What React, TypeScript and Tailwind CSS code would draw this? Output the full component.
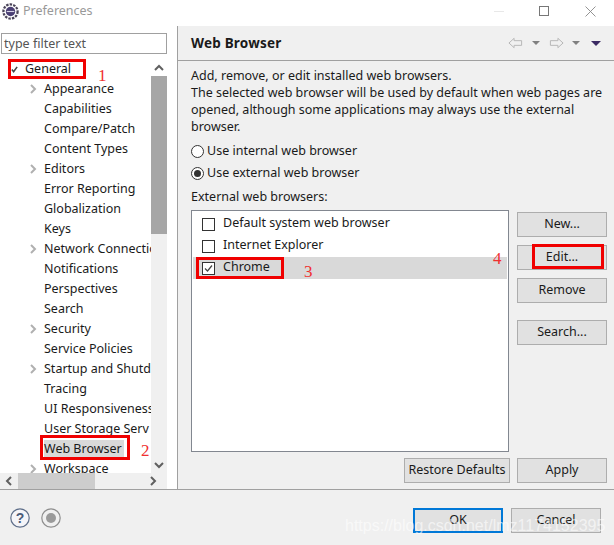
import React from 'react'

const treeItems = [
  { label: 'Appearance', arrow: true },
  { label: 'Capabilities' },
  { label: 'Compare/Patch' },
  { label: 'Content Types' },
  { label: 'Editors', arrow: true },
  { label: 'Error Reporting' },
  { label: 'Globalization' },
  { label: 'Keys' },
  { label: 'Network Connectio', arrow: true },
  { label: 'Notifications' },
  { label: 'Perspectives' },
  { label: 'Search' },
  { label: 'Security', arrow: true },
  { label: 'Service Policies' },
  { label: 'Startup and Shutd', arrow: true },
  { label: 'Tracing' },
  { label: 'UI Responsiveness' },
  { label: 'User Storage Serv' },
  { label: 'Web Browser', selected: true },
  { label: 'Workspace', arrow: true },
]

const Chevron = ({ dir, color = '#a8a8a8' }: { dir: 'up' | 'down' | 'left' | 'right'; color?: string }) => {
  const d = {
    up: 'M1 6 L5 2 L9 6',
    down: 'M1 2 L5 6 L9 2',
    left: 'M6 1 L2 5 L6 9',
    right: 'M2 1 L6 5 L2 9',
  }[dir]
  const size = dir === 'up' || dir === 'down' ? 'w-[10px] h-[8px]' : 'w-[8px] h-[10px]'
  const box = dir === 'up' || dir === 'down' ? '0 0 10 8' : '0 0 8 10'
  return (
    <svg viewBox={box} className={size} fill="none" stroke={color} strokeWidth="2">
      <path d={d} />
    </svg>
  )
}

const Btn = ({ label, className = '' }: { label: string; className?: string }) => (
  <button className={`h-[25px] bg-[#e1e1e1] border border-[#adadad] text-[12.5px] text-[#1a1a1a] flex items-center justify-center ${className}`}>
    {label}
  </button>
)

const Mark = ({ className }: { className: string }) => (
  <div className={`absolute border-[3px] border-[#f00000] ${className}`} />
)

const Num = ({ n, className }: { n: string; className: string }) => (
  <span className={`absolute text-[#f03030] text-[17px] leading-none font-['Liberation_Serif',serif] ${className}`}>{n}</span>
)

const Radio = ({ checked, label }: { checked?: boolean; label: string }) => (
  <div className="flex items-center h-[22px]">
    <span className="w-[13px] h-[13px] shrink-0 rounded-full border border-[#333] bg-white flex items-center justify-center mr-[3px]">
      {checked && <span className="w-[7px] h-[7px] rounded-full bg-[#333]" />}
    </span>
    <span>{label}</span>
  </div>
)

const Row = ({ label, checked, active }: { label: string; checked?: boolean; active?: boolean }) => (
  <div className={`flex items-center h-[22px] pl-[9px] ${active ? 'bg-[#d9d9d9]' : ''}`}>
    <span className="w-[13px] h-[13px] shrink-0 border border-[#333] bg-white flex items-center justify-center mr-[8px]">
      {checked && (
        <svg viewBox="0 0 11 11" className="w-[11px] h-[11px]" fill="none" stroke="#444" strokeWidth="1.2">
          <path d="M2 5.5 L4.5 8 L9 2.5" />
        </svg>
      )}
    </span>
    <span className="-mt-[1px]">{label}</span>
  </div>
)

export default function App() {
  return (
    <div className="relative w-[614px] h-[545px] overflow-hidden bg-[#f0f0f0] flex flex-col text-[12.5px] text-[#1a1a1a] font-['Noto_Sans',sans-serif]">
      {/* title bar */}
      <div className="h-[26px] shrink-0 bg-white flex items-center pl-[2px] pb-[4px]">
        <svg viewBox="0 0 18 18" className="w-[17px] h-[17px]">
          <circle cx="9" cy="9" r="7.5" fill="none" stroke="#4a4458" strokeWidth="2.4" strokeDasharray="2.6 1.2" />
          <circle cx="9" cy="9" r="5" fill="#4a3f73" />
          <rect x="5" y="8.4" width="8" height="1.2" fill="#d8d4e8" />
        </svg>
        <span className="ml-[4px] text-[#999] text-[12.5px]">Preferences</span>
        <div className="ml-auto flex items-center">
          <span className="w-[10px] h-px bg-[#e8e8e8] mr-[35px]" />
          <span className="w-[10px] h-[10px] border border-[#777] mr-[36px]" />
          <svg viewBox="0 0 11 11" className="w-[11px] h-[11px] mr-[18px]" fill="none" stroke="#888" strokeWidth="0.9">
            <path d="M0.5 0.5 L10.5 10.5 M10.5 0.5 L0.5 10.5" />
          </svg>
        </div>
      </div>

      {/* main area */}
      <div className="flex h-[464px] shrink-0 border-b border-[#a0a0a0]">
        {/* left pane */}
        <div className="w-[178px] shrink-0 bg-white border-r border-[#a0a0a0] flex flex-col overflow-hidden">
          <div className="w-[167px] h-[33px] shrink-0 pt-[7px] pl-px">
            <div className="h-[21px] w-[166px] border border-[#a0a0a0] flex items-center pl-[2px] pt-[2px] text-[#555]">type filter text</div>
          </div>
          <div className="w-[167px] h-[414px] shrink-0 flex">
            <div className="w-[151px] shrink-0 overflow-hidden whitespace-nowrap">
              <div className="flex items-center h-[20px]">
                <svg viewBox="0 0 8 8" className="w-[7px] h-[7px] ml-[11px] mr-[7px]" fill="none" stroke="#444" strokeWidth="1.8">
                  <path d="M1 4 L3 6.5 L7 1" />
                </svg>
                <span>General</span>
              </div>
              {treeItems.map((it) => (
                <div key={it.label} className="flex items-center h-[20px] pl-[29px]">
                  <span className="w-[15px] shrink-0 flex">{it.arrow && <Chevron dir="right" color="#b0b0b0" />}</span>
                  <span className={`shrink-0 ${it.selected ? 'bg-[#d9d9d9] pr-[2px]' : ''}`}>{it.label}</span>
                </div>
              ))}
            </div>
            {/* vertical scrollbar */}
            <div className="w-[16px] flex flex-col">
              <div className="h-[17px] flex items-center justify-center"><Chevron dir="up" color="#606060" /></div>
              <div className="h-[158px] bg-[#a6a6a6]" />
              <div className="flex-1 bg-[#f0f0f0]" />
              <div className="h-[17px] bg-[#f0f0f0] flex items-center justify-center"><Chevron dir="down" color="#606060" /></div>
            </div>
          </div>
          {/* horizontal scrollbar */}
          <div className="w-[167px] h-[16px] shrink-0 bg-[#f0f0f0] flex items-center">
            <div className="w-[18px] flex justify-center"><Chevron dir="left" color="#606060" /></div>
            <div className="w-[77px] h-full bg-[#cdcdcd]" />
            <div className="ml-auto w-[18px] mr-[5px] flex justify-center"><Chevron dir="right" color="#606060" /></div>
          </div>
        </div>

        {/* right pane */}
        <div className="flex-1 min-w-0 flex flex-col">
          <div className="h-[35px] shrink-0 border-b border-[#a0a0a0] flex items-center pl-[13px] pr-[13px]">
            <span className="font-bold text-[13.5px] tracking-[0.2px]">Web Browser</span>
            <div className="ml-auto flex items-center">
              <svg viewBox="0 0 16 12" className="w-[15px] h-[12px] mr-[9px]" fill="none" stroke="#b4b4b4">
                <path d="M1 6 L6.5 1 V3.5 H14.5 V8.5 H6.5 V11 Z" />
              </svg>
              <span className="w-0 h-0 border-x-[4px] border-x-transparent border-t-[4px] border-t-[#808080] mr-[9px]" />
              <svg viewBox="0 0 16 12" className="w-[15px] h-[12px] mr-[8px]" fill="none" stroke="#b4b4b4">
                <path d="M15 6 L9.5 1 V3.5 H1.5 V8.5 H9.5 V11 Z" />
              </svg>
              <span className="w-0 h-0 border-x-[4px] border-x-transparent border-t-[4px] border-t-[#808080] mr-[11px]" />
              <span className="w-0 h-0 border-x-[5px] border-x-transparent border-t-[5px] border-t-[#3b2a63]" />
            </div>
          </div>
          <div className="flex-1 pl-[13px] pt-[6px] flex flex-col">
            <p className="leading-[17px] whitespace-nowrap">
              Add, remove, or edit installed web browsers.<br />
              The selected web browser will be used by default when web pages are<br />
              opened, although some applications may always use the external<br />
              browser.
            </p>
            <div className="mt-[5px]">
              <Radio label="Use internal web browser" />
              <Radio checked label="Use external web browser" />
            </div>
            <div className="mt-[4px] leading-[18px]">External web browsers:</div>
            <div className="mt-[4px] flex gap-[8px]">
              <div className="w-[318px] h-[242px] bg-white border border-[#828790] pt-[2px] px-px">
                <Row label="Default system web browser" />
                <Row label="Internet Explorer" />
                <Row label="Chrome" checked active />
              </div>
              <div className="flex flex-col w-[90px] pt-[2px]">
                <Btn label="New..." />
                <Btn label="Edit..." className="mt-[8px]" />
                <Btn label="Remove" className="mt-[8px]" />
                <Btn label="Search..." className="mt-[17px]" />
              </div>
            </div>
            <div className="mt-[6px] flex gap-[7px] pl-[213px]">
              <Btn label="Restore Defaults" className="w-[106px]" />
              <Btn label="Apply" className="w-[90px]" />
            </div>
          </div>
        </div>
      </div>

      {/* bottom bar */}
      <div className="flex-1 flex items-start pt-[18px] pl-[10px] pr-[13px]">
        <svg viewBox="0 0 20 20" className="w-[20px] h-[20px]">
          <circle cx="10" cy="10" r="9.2" fill="#f4f4f8" stroke="#5f6f8a" strokeWidth="1.2" />
          <text x="10" y="15" textAnchor="middle" fontSize="14" fontWeight="700" fill="#4a5a78" fontFamily="Liberation Sans">?</text>
        </svg>
        <svg viewBox="0 0 20 20" className="w-[20px] h-[20px] ml-[11px]">
          <circle cx="10" cy="10" r="9.2" fill="#f0f0f0" stroke="#8f8f8f" strokeWidth="1.2" />
          <circle cx="10" cy="10" r="5" fill="#9a9a9a" />
        </svg>
        <div className="ml-auto flex gap-[8px]">
          <button className="w-[90px] h-[25px] bg-[#e1e1e1] border-2 border-[#0078d7] flex items-center justify-center">OK</button>
          <Btn label="Cancel" className="w-[90px]" />
        </div>
      </div>

      {/* red annotations drawn over the dialog */}
      <Mark className="left-[8px] top-[59px] w-[78px] h-[20px]" />
      <Mark className="left-[40px] top-[435px] w-[90px] h-[25px]" />
      <Mark className="left-[196px] top-[257px] w-[88px] h-[22px]" />
      <Mark className="left-[532px] top-[244px] w-[72px] h-[25px]" />
      <Num n="1" className="left-[98px] top-[67px]" />
      <Num n="2" className="left-[141px] top-[442px]" />
      <Num n="3" className="left-[304px] top-[263px]" />
      <Num n="4" className="left-[493px] top-[250px]" />

      {/* watermark */}
      <span className="absolute left-[345px] top-[518px] text-[16px] leading-none text-white/60 font-['Liberation_Sans',sans-serif] whitespace-nowrap">
        https://blog.csdn.net/lmz1174152395
      </span>
    </div>
  )
}
